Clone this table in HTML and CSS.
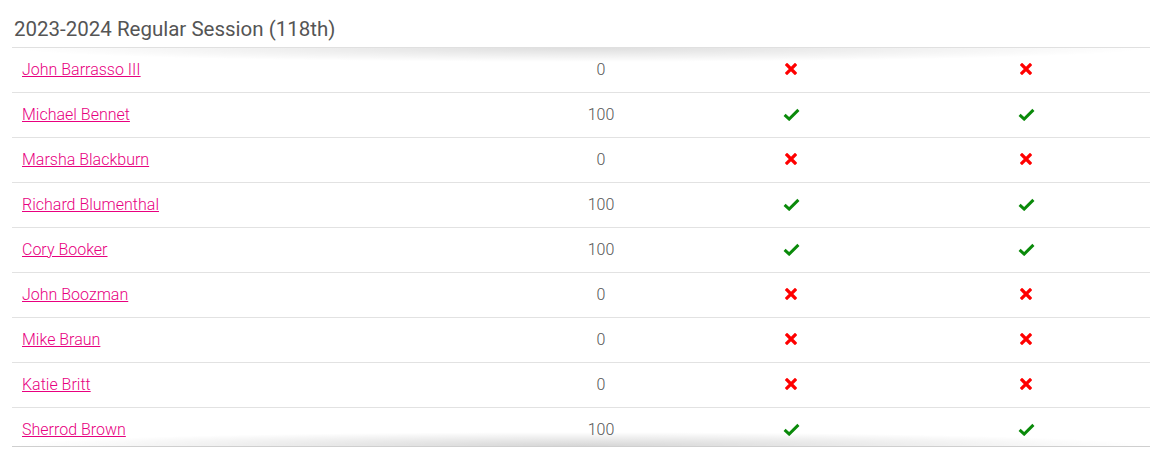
FILE: index.html
```html
<!DOCTYPE html>
<html>
<head>
<meta charset="utf-8">
<link rel="stylesheet" href="styles.css">
</head>
<body>
<svg width="0" height="0" class="defs">
  <defs>
    <symbol id="x" viewBox="0 0 12 12"><path d="M2 2 L10 10 M10 2 L2 10" stroke="#f00" stroke-width="3.2" stroke-linecap="square"/></symbol>
    <symbol id="ok" viewBox="0 0 16 12"><path d="M1.5 6.3 L5.8 10.3 L14.5 1.6" fill="none" stroke="#0a8a0a" stroke-width="2.8"/></symbol>
  </defs>
</svg>
<div class="panel">
  <h2 class="title">2023-2024 Regular Session (118th)</h2>
  <div class="scroll">
    <div class="rows">
      <div class="row"><a href="#" class="name">John Barrasso III</a><span class="score">0</span><span class="ic"><svg class="xi"><use href="#x"/></svg></span><span class="ic"><svg class="xi"><use href="#x"/></svg></span></div>
      <div class="row"><a href="#" class="name">Michael Bennet</a><span class="score">100</span><span class="ic"><svg class="ck"><use href="#ok"/></svg></span><span class="ic"><svg class="ck"><use href="#ok"/></svg></span></div>
      <div class="row"><a href="#" class="name">Marsha Blackburn</a><span class="score">0</span><span class="ic"><svg class="xi"><use href="#x"/></svg></span><span class="ic"><svg class="xi"><use href="#x"/></svg></span></div>
      <div class="row"><a href="#" class="name">Richard Blumenthal</a><span class="score">100</span><span class="ic"><svg class="ck"><use href="#ok"/></svg></span><span class="ic"><svg class="ck"><use href="#ok"/></svg></span></div>
      <div class="row"><a href="#" class="name">Cory Booker</a><span class="score">100</span><span class="ic"><svg class="ck"><use href="#ok"/></svg></span><span class="ic"><svg class="ck"><use href="#ok"/></svg></span></div>
      <div class="row"><a href="#" class="name">John Boozman</a><span class="score">0</span><span class="ic"><svg class="xi"><use href="#x"/></svg></span><span class="ic"><svg class="xi"><use href="#x"/></svg></span></div>
      <div class="row"><a href="#" class="name">Mike Braun</a><span class="score">0</span><span class="ic"><svg class="xi"><use href="#x"/></svg></span><span class="ic"><svg class="xi"><use href="#x"/></svg></span></div>
      <div class="row"><a href="#" class="name">Katie Britt</a><span class="score">0</span><span class="ic"><svg class="xi"><use href="#x"/></svg></span><span class="ic"><svg class="xi"><use href="#x"/></svg></span></div>
      <div class="row"><a href="#" class="name">Sherrod Brown</a><span class="score">100</span><span class="ic"><svg class="ck"><use href="#ok"/></svg></span><span class="ic"><svg class="ck"><use href="#ok"/></svg></span></div>
    </div>
  </div>
</div>
</body>
</html>
```
FILE: styles.css
```css
html, body {
  margin: 0;
  padding: 0;
  background: #fff;
}
body {
  font-family: Roboto, "Liberation Sans", sans-serif;
  color: #555;
}
.defs {
  position: absolute;
  width: 0;
  height: 0;
}
.panel {
  width: 1138px;
  margin-left: 12px;
}
.title {
  margin: 0;
  padding: 16px 0 5px 2px;
  font-size: 20.5px;
  line-height: 26px;
  font-weight: 400;
  color: #555;
  border-bottom: 1px solid #e0e0e0;
}
.scroll {
  position: relative;
  height: 398px;
  overflow: hidden;
  border-bottom: 1px solid #cfcfcf;
}
.scroll::before,
.scroll::after {
  content: "";
  position: absolute;
  left: 0;
  right: 0;
  height: 14px;
  pointer-events: none;
  z-index: 2;
}
.scroll::before {
  top: 0;
  background: radial-gradient(ellipse 50% 100% at 50% 0, rgba(0,0,0,0.13), rgba(0,0,0,0));
}
.scroll::after {
  bottom: 0;
  background: radial-gradient(ellipse 50% 100% at 50% 100%, rgba(0,0,0,0.16), rgba(0,0,0,0));
}
.row {
  display: grid;
  grid-template-columns: 510px 158px 222px 248px;
  align-items: center;
  height: 42px;
  padding-bottom: 2px;
  border-bottom: 1px solid #e2e2e2;
  font-size: 16px;
  font-weight: 300;
}
.name {
  padding-left: 10px;
  color: #e8007f;
  text-decoration: underline;
  justify-self: start;
}
.score {
  text-align: center;
  color: #555;
}
.ic {
  display: flex;
  justify-content: center;
  align-items: center;
}
.xi {
  width: 12px;
  height: 12px;
}
.ck {
  width: 17px;
  height: 13px;
}
```
